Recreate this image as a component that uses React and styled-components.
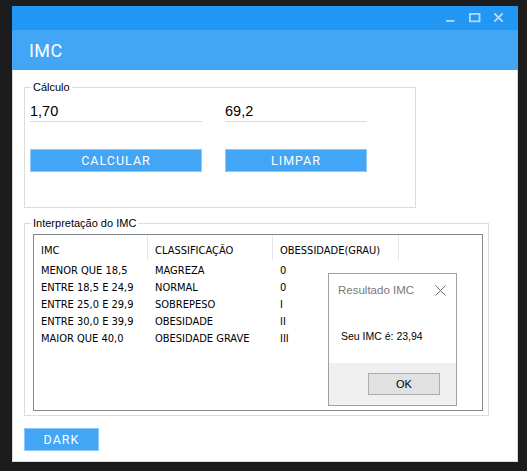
import React from "react";
import styled, { createGlobalStyle } from "styled-components";

const GlobalStyle = createGlobalStyle`
  html, body {
    margin: 0;
    background: #1c1c1c;
  }
  body {
    font-family: "Liberation Sans", Arial, sans-serif;
  }
  * {
    box-sizing: border-box;
  }
`;

const columns = "114px 125px 126px";

const rows = [
  ["MENOR QUE 18,5", "MAGREZA", "0"],
  ["ENTRE 18,5 E 24,9", "NORMAL", "0"],
  ["ENTRE 25,0 E 29,9", "SOBREPESO", "I"],
  ["ENTRE 30,0 E 39,9", "OBESIDADE", "II"],
  ["MAIOR QUE 40,0", "OBESIDADE GRAVE", "III"],
];

const App = () => {
  return (
    <>
      <GlobalStyle />
      <Page>
        <Window>
          <TitleBar>
            <Control>
              <svg width="24" height="24" viewBox="0 0 24 24">
                <rect x="8" y="14" width="8.5" height="1.8" fill="#b3dafc" />
              </svg>
            </Control>
            <Control>
              <svg width="24" height="24" viewBox="0 0 24 24">
                <rect x="7.9" y="7.9" width="9.6" height="7.4" fill="none" stroke="#b3dafc" strokeWidth="1.8" />
              </svg>
            </Control>
            <Control>
              <svg width="24" height="24" viewBox="0 0 24 24">
                <path d="M8.3 7.3 L16.7 15.7 M16.7 7.3 L8.3 15.7" stroke="#b3dafc" strokeWidth="1.9" />
              </svg>
            </Control>
          </TitleBar>
          <Header>IMC</Header>
          <Body>
            <Group $padLeft={5} $padBottom={35}>
              <Legend $indent={1}>Cálculo</Legend>
              <FormGrid>
                <TextField value="1,70" readOnly />
                <TextField value="69,2" readOnly />
              </FormGrid>
              <FormGrid $top={27}>
                <BlueButton>CALCULAR</BlueButton>
                <BlueButton>LIMPAR</BlueButton>
              </FormGrid>
            </Group>
            <Group $padLeft={8} $padBottom={4} $wide>
              <Legend $indent={-2}>Interpretação do IMC</Legend>
              <ListView>
                <HeaderRow>
                  <HeaderCell>IMC</HeaderCell>
                  <HeaderCell>CLASSIFICAÇÃO</HeaderCell>
                  <HeaderCell>OBESSIDADE(GRAU)</HeaderCell>
                </HeaderRow>
                <Rows>
                  {rows.map((r) => (
                    <Row key={r[0]}>
                      <Cell>{r[0]}</Cell>
                      <Cell>{r[1]}</Cell>
                      <Cell>{r[2]}</Cell>
                    </Row>
                  ))}
                </Rows>

                {/* message box on top of the list */}
                <Dialog>
                  <DialogTitle>
                    <span>Resultado IMC</span>
                    <svg width="11" height="11" viewBox="0 0 11 11">
                      <path d="M0.5 0.5 L10.5 10.5 M10.5 0.5 L0.5 10.5" stroke="#707070" strokeWidth="1" />
                    </svg>
                  </DialogTitle>
                  <DialogBody>Seu IMC é: 23,94</DialogBody>
                  <DialogFooter>
                    <OkButton>OK</OkButton>
                  </DialogFooter>
                </Dialog>
              </ListView>
            </Group>
            <BlueButton $width={75} $top={12}>
              DARK
            </BlueButton>
          </Body>
        </Window>
      </Page>
    </>
  );
};

const Page = styled.div`
  padding: 6px 0 0 12px;
`;

const Window = styled.div`
  width: 506px;
  height: 456px;
  display: flex;
  flex-direction: column;
  background: #fff;
`;

const TitleBar = styled.div`
  height: 24px;
  flex: none;
  background: #2196f3;
  display: flex;
  justify-content: flex-end;
  padding-right: 8px;
`;

const Control = styled.div`
  width: 24px;
  height: 24px;
  svg {
    display: block;
  }
`;

const Header = styled.div`
  height: 40px;
  flex: none;
  background: #42a5f5;
  color: #fff;
  display: flex;
  align-items: center;
  padding-left: 17px;
  font-family: Roboto, "Liberation Sans", sans-serif;
  font-size: 18px;
  font-weight: 400;
  letter-spacing: 0.4px;
`;

const Body = styled.div`
  flex: 1;
  display: flex;
  flex-direction: column;
  align-items: flex-start;
  padding: 10px 11px 0 11px;
  border: 1px solid #d9d9d9;
  border-top: none;
`;

const Group = styled.fieldset`
  margin: 0;
  margin-top: ${(p) => (p.$wide ? "8px" : "0")};
  width: ${(p) => (p.$wide ? "465px" : "392px")};
  border: 1px solid #dcdcdc;
  padding: ${(p) => (p.$wide ? "4px" : "6px")} 5px ${(p) => p.$padBottom}px
    ${(p) => p.$padLeft}px;
  min-width: 0;
`;

const Legend = styled.legend`
  margin-left: ${(p) => p.$indent}px;
  padding: 0 2px;
  font-size: 11px;
  line-height: 14px;
  color: #000;
`;

const FormGrid = styled.div`
  display: grid;
  grid-template-columns: 172px 142px;
  column-gap: 23px;
  margin-top: ${(p) => p.$top || 0}px;
`;

const TextField = styled.input`
  height: 22px;
  border: none;
  border-bottom: 1px solid #dadada;
  padding: 0;
  outline: none;
  background: transparent;
  font-family: "Liberation Sans", Arial, sans-serif;
  font-size: 14.5px;
  color: #000;
`;

const BlueButton = styled.button`
  height: 23px;
  width: ${(p) => (p.$width ? `${p.$width}px` : "auto")};
  margin-top: ${(p) => p.$top || 0}px;
  background: #42a5f5;
  border: 1px solid #8ec8f8;
  color: #fff;
  font-family: Roboto, "Liberation Sans", sans-serif;
  font-size: 12.5px;
  font-weight: 400;
  letter-spacing: 1px;
  padding: 0;
  cursor: pointer;
`;

const ListView = styled.div`
  position: relative;
  width: 450px;
  height: 177px;
  border: 1px solid #828790;
  background: #fff;
  font-family: "DejaVu Sans Condensed", "DejaVu Sans", sans-serif;
  font-stretch: condensed;
  font-size: 11px;
  line-height: 17px;
  color: #000;
`;

const HeaderRow = styled.div`
  display: grid;
  grid-template-columns: ${columns};
  height: 25px;
`;

const HeaderCell = styled.div`
  border-right: 1px solid #e5e5e5;
  padding: 7px 0 0 7px;
  white-space: nowrap;
`;

const Rows = styled.div`
  margin-top: 2px;
`;

const Row = styled.div`
  display: grid;
  grid-template-columns: ${columns};
  height: 17px;
`;

const Cell = styled.div`
  padding-left: 7px;
  white-space: nowrap;
`;

const Dialog = styled.div`
  position: absolute;
  left: 294px;
  top: 38px;
  width: 129px;
  height: 133px;
  border: 1px solid #a0a0a0;
  background: #fff;
  display: flex;
  flex-direction: column;
  font-family: "Liberation Sans", Arial, sans-serif;
  font-stretch: normal;
`;

const DialogTitle = styled.div`
  height: 32px;
  display: flex;
  align-items: center;
  justify-content: space-between;
  padding: 0 10px 0 9px;
  font-size: 11.5px;
  color: #7a7a7a;
  svg {
    display: block;
  }
`;

const DialogBody = styled.div`
  flex: 1;
  display: flex;
  align-items: center;
  padding: 4px 0 0 12px;
  font-size: 10.5px;
  color: #000;
`;

const DialogFooter = styled.div`
  height: 42px;
  background: #f0f0f0;
  display: flex;
  justify-content: flex-end;
  padding: 10px 16px 0 0;
`;

const OkButton = styled.button`
  width: 72px;
  height: 22px;
  background: #e1e1e1;
  border: 1px solid #adadad;
  font-family: "Liberation Sans", Arial, sans-serif;
  font-size: 11px;
  color: #000;
  padding: 0;
`;

export default App;
